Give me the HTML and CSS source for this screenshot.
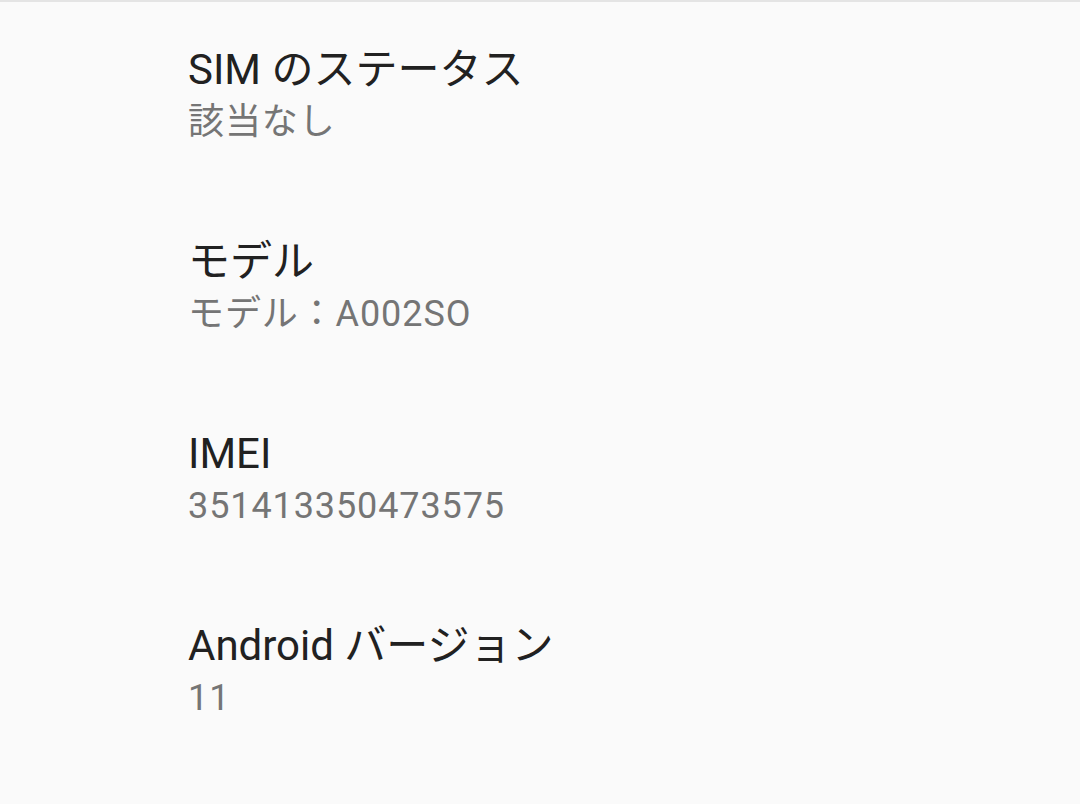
FILE: index.html
```html
<!DOCTYPE html>
<html>
<head>
<meta charset="UTF-8">
<title>端末情報</title>
<link rel="stylesheet" href="styles.css">
</head>
<body>
  <div id="about">
    <div class="pref-item">
      <div class="pref-title">SIM のステータス</div>
      <div class="pref-summary">該当なし</div>
    </div>
    <div class="pref-item">
      <div class="pref-title">モデル</div>
      <div class="pref-summary">モデル：A002SO</div>
    </div>
    <div class="pref-item">
      <div class="pref-title">IMEI</div>
      <div class="pref-summary">351413350473575</div>
    </div>
    <div class="pref-item">
      <div class="pref-title">Android バージョン</div>
      <div class="pref-summary">11</div>
    </div>
  </div>
</body>
</html>
```

FILE: styles.css
```css
/* General Styles */
body {
    margin: 0;
    background-color: #fafafa;
    font-family: Roboto, 'Noto Sans CJK JP', sans-serif;
    overflow: hidden;
}

#about {
    border-top: 2px solid #e4e4e4;
}

.pref-item {
    padding: 40px 0 46px 188px;
}

.pref-title {
    font-size: 42px;
    line-height: 56px;
    color: #212121;
}

.pref-summary {
    font-size: 36px;
    line-height: 52px;
    margin-top: -2px;
    color: #757575;
    letter-spacing: 0.9px;
}
```
